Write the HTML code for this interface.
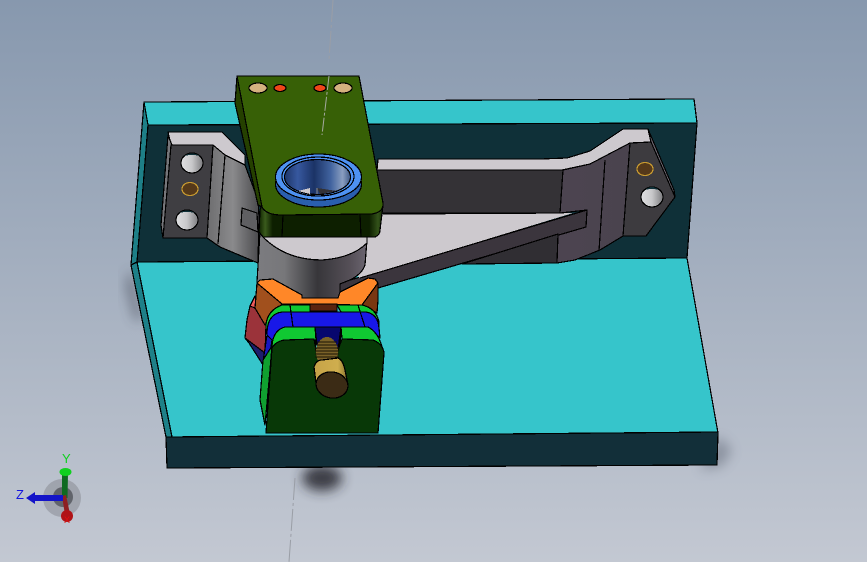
<!DOCTYPE html>
<html><head><meta charset="utf-8"><style>html,body{margin:0;padding:0;background:#aab4c2}svg{display:block}</style></head><body>
<svg width="867" height="562" viewBox="0 0 867 562" xmlns="http://www.w3.org/2000/svg">
<defs>
<linearGradient id="bg" x1="0" y1="0" x2="0" y2="1"><stop offset="0" stop-color="#8798ae"/><stop offset="1" stop-color="#c3c8d2"/></linearGradient>
<linearGradient id="cyl" x1="0" y1="0" x2="1" y2="0"><stop offset="0" stop-color="#7c7c80"/><stop offset=".25" stop-color="#77777a"/><stop offset=".55" stop-color="#37363a"/><stop offset=".85" stop-color="#565058"/><stop offset="1" stop-color="#6b6570"/></linearGradient>
<linearGradient id="lbody" x1="0" y1="0" x2="1" y2="0"><stop offset="0" stop-color="#6d6d6f"/><stop offset=".5" stop-color="#8a8a8c"/><stop offset="1" stop-color="#4a4a4d"/></linearGradient>
<linearGradient id="rbody" x1="0" y1="0" x2="1" y2="0"><stop offset="0" stop-color="#3a363c"/><stop offset=".6" stop-color="#4c4450"/><stop offset="1" stop-color="#4a434e"/></linearGradient>
<linearGradient id="front" x1="0" y1="0" x2="1" y2="0"><stop offset="0" stop-color="#0e2200"/><stop offset=".05" stop-color="#3a5a1c"/><stop offset=".11" stop-color="#0d1f00"/><stop offset=".89" stop-color="#0d1f00"/><stop offset=".96" stop-color="#33521a"/><stop offset="1" stop-color="#152c04"/></linearGradient>
<linearGradient id="hole" x1="0" y1="0" x2="1" y2="0"><stop offset="0" stop-color="#1d3568"/><stop offset=".2" stop-color="#37589f"/><stop offset=".45" stop-color="#1b3366"/><stop offset=".7" stop-color="#41639f"/><stop offset=".88" stop-color="#8a9ec0"/><stop offset="1" stop-color="#3f5a88"/></linearGradient>
<linearGradient id="gold" x1="0" y1="0" x2="1" y2="0"><stop offset="0" stop-color="#c6a348"/><stop offset=".7" stop-color="#cfae4e"/><stop offset="1" stop-color="#87702e"/></linearGradient>
<linearGradient id="ball" x1="0" y1="0" x2="1" y2="0"><stop offset="0" stop-color="#e0e0e2"/><stop offset=".5" stop-color="#c8c8ca"/><stop offset="1" stop-color="#7d7d80"/></linearGradient>
<filter id="b1" x="-50%" y="-50%" width="200%" height="200%"><feGaussianBlur stdDeviation="9"/></filter>
<filter id="b2" x="-50%" y="-50%" width="200%" height="200%"><feGaussianBlur stdDeviation="6"/></filter>
</defs>
<rect width="867" height="562" fill="url(#bg)"/>
<!-- shadows -->
<polygon points="131,268 126,285 135,320 142,320" fill="#3c4250" opacity=".6" filter="url(#b2)"/>
<polygon points="718,436 732,450 722,466 700,470" fill="#4a505e" opacity=".4" filter="url(#b2)"/>
<ellipse cx="322" cy="478" rx="20" ry="13" fill="#26282e" opacity=".85" filter="url(#b2)"/>
<!-- axis line -->
<path d="M333 0L329 60M295 478L289 562" stroke="#9a9ea6" stroke-width="1" stroke-dasharray="22 3 3 3" fill="none"/>
<g stroke="#000" stroke-width="1.2" stroke-linejoin="round" shape-rendering="crispEdges">
<!-- wall -->
<polygon points="144,102 694,99 697,123 148,125" fill="#36c5cb"/>
<polygon points="148,125 697,123 687,258 137,262" fill="#0f3038"/>
<polygon points="144,102 148,125 137,262 131,265" fill="#1e7f87"/>
<!-- floor -->
<polygon points="137,262 687,258 718,433 168,437" fill="#36c5cb"/>
<polygon points="131,265 137,262 172,437 166,437" fill="#1e8088"/>
<polygon points="166,437 718,432 717,465 167,468" fill="#122f39"/>
<!-- right bracket -->
<polygon points="378,159 540,159 567,158 590,151 623,129 648,129 651,142 630,143 590,164 562,170 377,170" fill="#cdc9ce"/>
<polygon points="377,170 564,170 560,213 382,213" fill="#343236"/>
<polygon points="563,170 590,164 630,143 623,236 600,250 575,260 557,263 462,264 558,234 586,227 587,210 560,213" fill="url(#rbody)"/>
<path d="M605 160L599 251M563 170L560 213M558 234L557 263" fill="none"/>
<polygon points="630,143 651,142 675,197 646,236 623,236" fill="#3d3b3f"/>
<polygon points="648,129 651,142 675,197 674,190" fill="#6b6670"/>
<polygon points="340,283 587,210 586,227 378,288 340,296" fill="#3b353d"/>
<polygon points="462,264 558,234 557,263" fill="#302e33"/>
<polygon points="367,214 573,213 360,278 350,270" fill="#cdc9ce" stroke="none"/>
<path d="M383 214L564 213" fill="none"/>
<path d="M360 278L587 210" fill="none"/>
<ellipse cx="645" cy="169" rx="8" ry="6.500" fill="#55391a" stroke="#c79a30"/>
<ellipse cx="652" cy="197" rx="11" ry="10" fill="url(#ball)"/>
<path d="M645 190Q652 184 659 190Q652 188 645 190Z" fill="#0f3038" stroke="none"/>
<!-- left bracket -->
<polygon points="168,132 222,132 245,155 245,165 225,155 213,145 171,145" fill="#cdc9ce"/>
<polygon points="168,135 172,145 163,238 161,225" fill="#76767a"/>
<polygon points="171,145 213,145 207,238 163,238" fill="#3f3e42"/>
<polygon points="213,145 225,155 245,165 258,200 259,217 258,263 220,247 207,238" fill="url(#lbody)"/>
<path d="M225 155L218 244" fill="none"/>
<polygon points="242,208 257,213 258,232 241,225" fill="#5f5f62"/>
<ellipse cx="192" cy="163" rx="11" ry="10" fill="url(#ball)"/>
<path d="M184 156Q192 151 200 156Q192 154 184 156Z" fill="#0f3038" stroke="none"/>
<ellipse cx="190" cy="189" rx="8" ry="6.500" fill="#55391a" stroke="#c79a30"/>
<ellipse cx="187" cy="220" rx="11" ry="10" fill="url(#ball)"/>
<path d="M179 213Q187 208 195 213Q187 211 179 213Z" fill="#0f3038" stroke="none"/>
<!-- cylinder -->
<path d="M260 232L367 240L365 265Q362 274 350 280L340 284L340 300L262 300L257 282Z" fill="url(#cyl)"/>
<path d="M262 236Q285 260 322 260Q352 258 367 243L367 215L262 215Z" fill="#cdc9ce"/>
<!-- red / navy side -->
<polygon points="249,343 245,338 265,353 265,368" fill="#1d1d6c"/>
<polygon points="250,306 255,296 262,300 258,312" fill="#ee5a5a"/>
<polygon points="250,306 255,308 266,325 265,353 245,338 247,320" fill="#9b333a"/>
<!-- orange block -->
<polygon points="257,283 260,280 273,279 302,295 302,298 338,298 340,292 368,278 375,279 378,283 362,305 282,304" fill="#ff8728"/>
<polygon points="257,283 282,304 267,322 265,325 255,308" fill="#a1501d"/>
<polygon points="378,283 362,305 377,313 378,300" fill="#7a3711"/>
<polygon points="310,304 337,304 337,311 310,311" fill="#5a2410"/>
<!-- green top -->
<path d="M266 324Q268 310 282 305L310 305L310 312L341 312L337 305L362 305Q376 308 379 322L379 330L266 330Z" fill="#10c832"/>
<!-- blue band -->
<path d="M267 337Q266 314 282 312L366 312Q378 314 379 328L380 338L368 327L341 327L340 345L316 345L315 327L285 327L268 345Z" fill="#1818e8"/>
<polygon points="315,327 341,327 338,350 317,345" fill="#07076e"/>
<path d="M290 305L293 327M358 305L365 327" fill="none"/>
<!-- blue left strip -->
<polygon points="267,335 272,340 268,368 263,362" fill="#1818c0"/>
<!-- green lower -->
<path d="M272 346Q273 330 285 327L315 327L316 340L286 340L273 346Z" fill="#10c832"/>
<path d="M341 327L368 327Q378 332 382 347L384 353L373 340L342 339Z" fill="#10c832"/>
<polygon points="263,360 272,346 270,370 265,425 260,400" fill="#10a030"/>
<!-- dark green front -->
<path d="M272 348Q276 341 285 340L314 339L316 350L338 350L342 339L373 340Q383 344 384 353L378 433L266 433Z" fill="#083807"/>
<!-- thread -->
<ellipse cx="327" cy="352" rx="11" ry="15" fill="#7a6228" stroke="none"/>
<path d="M317 342H337M316 345H338M315 348H339M315 351H339M315 354H339M315 357H339" stroke="#1a1404" stroke-width="1" fill="none"/>
<!-- gold screw -->
<path d="M314 367Q316 360 322 360L338 358Q343 360 345 370L348 385L316 383Z" fill="url(#gold)"/>
<ellipse cx="332" cy="385" rx="16" ry="13" fill="#3b2b15" transform="rotate(10 332 385)"/>
<!-- arm -->
<polygon points="237,76 235,103 258,205 262,207" fill="#254000"/>
<path d="M260 210L259 232L263 237L375 237Q380 235 380 230L383 205L262 205Z" fill="url(#front)"/>
<path d="M283 214L282 237M360 214L361 237" fill="none"/>
<path d="M237 76L359 76L383 203Q384 212 372 214L282 215Q266 215 262 207Z" fill="#376006"/>
<ellipse cx="258" cy="88" rx="9" ry="5" fill="#d4b27f"/>
<ellipse cx="280" cy="88" rx="6" ry="3.500" fill="#f04619"/>
<ellipse cx="320" cy="88" rx="6" ry="3.500" fill="#f04619"/>
<ellipse cx="343" cy="88" rx="9" ry="5" fill="#d4b27f"/>
<!-- ring -->
<ellipse cx="318.500" cy="184" rx="43" ry="23" fill="#2a5fae"/>
<ellipse cx="318.500" cy="177" rx="43" ry="23" fill="#4e92f2"/>
<ellipse cx="318" cy="176.500" rx="36" ry="19.500" fill="#4e92f2"/>
<ellipse cx="317.500" cy="177" rx="33" ry="17.500" fill="url(#hole)"/>
<polygon points="298,191 310,188 310,194" fill="#cdc9ce" stroke="none"/>
<polygon points="317,188 337,191 320,194" fill="#333236" stroke="none"/>
</g>
<path d="M317 188V194" stroke="#8d8d90" stroke-width="1"/>
<path d="M329 76L322 135" stroke="#a5a9a0" stroke-width="1" stroke-dasharray="14 2 3 2"/>
<!-- triad -->
<circle cx="62" cy="498" r="19" fill="#6c6e72" opacity=".35"/>
<circle cx="63" cy="497" r="10" fill="#3f4146" opacity=".65"/>
<polygon points="62,473 68,473 67.500,498 62,498" fill="#0f6a22"/>
<ellipse cx="65.500" cy="472" rx="6" ry="4" fill="#10d020"/>
<polygon points="62,496 66,495 70,514 65,515" fill="#8e1f22"/>
<circle cx="67" cy="516" r="6" fill="#b01317"/>
<polygon points="26,498 35,492 35,495 63,495 63,501 35,501 35,504" fill="#1414c8"/>
<text x="62" y="463" font-family="'Liberation Sans',sans-serif" font-size="13" fill="#10d020">Y</text>
<text x="16" y="499" font-family="'Liberation Sans',sans-serif" font-size="13" fill="#1414e0">Z</text>
<text x="64" y="523" font-family="'Liberation Sans',sans-serif" font-size="9" fill="#e01010">X</text>
</svg>
</body></html>
